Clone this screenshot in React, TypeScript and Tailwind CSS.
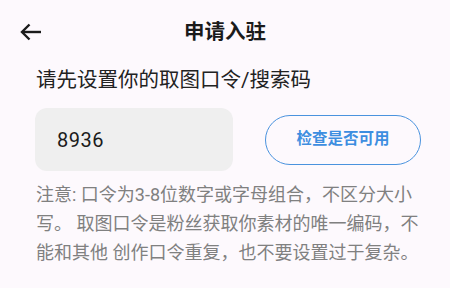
import React from "react";

const font = { fontFamily: 'Roboto, "Noto Sans CJK SC", "Noto Sans", sans-serif' };

export default function App() {
  return (
    <div className="w-[450px] h-[288px] bg-[#fdf9fd] overflow-hidden text-[#1b1b1b]" style={font}>
      <div className="relative h-[64px] flex items-center justify-center">
        <div className="absolute left-[19px] top-[22px]">
          <svg width="24" height="20" viewBox="0 0 24 20" fill="none" stroke="#1b1b1b" strokeWidth="2.4" strokeLinecap="butt" strokeLinejoin="miter">
            <path d="M22 10H3" />
            <path d="M10.5 2.5L3 10l7.5 7.5" />
          </svg>
        </div>
        <div className="text-[20.5px] font-bold leading-none">申请入驻</div>
      </div>
      <div className="pl-[36px] pt-[3px] text-[20.5px] leading-[26px] text-[#222]">请先设置你的取图口令/搜索码</div>
      <div className="flex items-center pl-[35px] pr-[29px] mt-[15px]">
        <div className="w-[198px] h-[63px] rounded-[12px] bg-[#efefef] flex items-center pl-[22px] text-[20px] tracking-[0.5px] text-[#1b1b1b]">8936</div>
        <div className="ml-auto w-[156px] h-[50px] rounded-full border-[1.5px] border-[#4a93de] flex items-center justify-center text-[15.5px] font-bold text-[#3d8ee0]">检查是否可用</div>
      </div>
      <div className="pl-[36px] pt-[9px] text-[18px] leading-[29px] text-[#808080]">
        <div>注意: 口令为3-8位数字或字母组合，不区分大小</div>
        <div>写。 取图口令是粉丝获取你素材的唯一编码，不</div>
        <div>能和其他 创作口令重复，也不要设置过于复杂。</div>
      </div>
    </div>
  );
}
